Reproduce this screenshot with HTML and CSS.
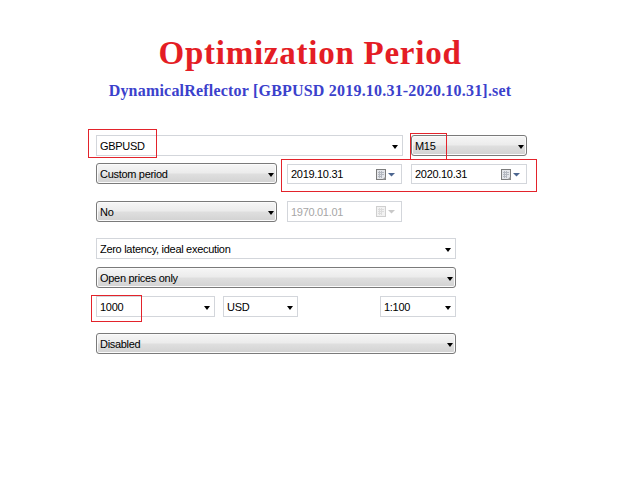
FILE: index.html
```html
<!DOCTYPE html>
<html>
<head>
<meta charset="utf-8">
<title>Optimization Period</title>
<link rel="stylesheet" href="styles.css">
</head>
<body>
<div class="page">
  <h1 class="title">Optimization Period</h1>
  <p class="subtitle">DynamicalReflector [GBPUSD 2019.10.31-2020.10.31].set</p>

  <div class="form">
    <div class="row row1">
      <div class="ctl flat w306"><span class="val">GBPUSD</span><i class="arrow"></i><b class="mark mark-symbol"></b></div>
      <div class="ctl grad w116"><span class="val">M15</span><i class="arrow"></i><b class="mark mark-tf"></b></div>
    </div>

    <div class="row row2">
      <div class="ctl grad w181"><span class="val">Custom period</span><i class="arrow"></i></div>
      <div class="dates">
        <div class="ctl flat w115"><span class="val">2019.10.31</span>
          <svg class="cal" width="20" height="11" viewBox="0 0 20 11"><rect x="0.5" y="0.5" width="9" height="10" fill="#e4e6ea" stroke="#7c7c7c"/><path d="M2 3.5H8M2 5.5H8M2 7.5H6M3.5 2V9M5.5 2V9" stroke="#b4b8c0" stroke-width="1"/><path d="M6.5 10.5L9.5 7.5V10.5Z" fill="#9a9a9a"/><path d="M12 4H19L15.5 7.5Z" fill="#4c6690"/></svg>
        </div>
        <div class="ctl flat w116"><span class="val">2020.10.31</span>
          <svg class="cal" width="20" height="11" viewBox="0 0 20 11"><rect x="0.5" y="0.5" width="9" height="10" fill="#e4e6ea" stroke="#7c7c7c"/><path d="M2 3.5H8M2 5.5H8M2 7.5H6M3.5 2V9M5.5 2V9" stroke="#b4b8c0" stroke-width="1"/><path d="M6.5 10.5L9.5 7.5V10.5Z" fill="#9a9a9a"/><path d="M12 4H19L15.5 7.5Z" fill="#4c6690"/></svg>
        </div>
        <b class="mark mark-dates"></b>
      </div>
    </div>

    <div class="row row3">
      <div class="ctl grad w181"><span class="val">No</span><i class="arrow"></i></div>
      <div class="ctl flat disabled w115"><span class="val">1970.01.01</span>
        <svg class="cal" width="20" height="11" viewBox="0 0 20 11"><rect x="0.5" y="0.5" width="9" height="10" fill="#f2f2f2" stroke="#cfcfcf"/><path d="M2 3.5H8M2 5.5H8M2 7.5H6M3.5 2V9M5.5 2V9" stroke="#dcdcdc" stroke-width="1"/><path d="M12 4H19L15.5 7.5Z" fill="#c8c8c8"/></svg>
      </div>
    </div>

    <div class="row row4">
      <div class="ctl flat w360"><span class="val">Zero latency, ideal execution</span><i class="arrow"></i></div>
    </div>

    <div class="row row5">
      <div class="ctl grad w360"><span class="val">Open prices only</span><i class="arrow"></i></div>
    </div>

    <div class="row row6">
      <div class="ctl flat w119"><span class="val">1000</span><i class="arrow"></i><b class="mark mark-deposit"></b></div>
      <div class="ctl flat w75"><span class="val">USD</span><i class="arrow"></i></div>
      <div class="ctl flat w76 push"><span class="val">1:100</span><i class="arrow"></i></div>
    </div>

    <div class="row row7">
      <div class="ctl grad w360"><span class="val">Disabled</span><i class="arrow"></i></div>
    </div>
  </div>
</div>
</body>
</html>
```

FILE: styles.css
```css
html, body {
  margin: 0;
  padding: 0;
  background: #ffffff;
}

.page {
  width: 620px;
}

.title {
  margin: 0;
  padding-top: 34px;
  height: 38px;
  line-height: 38px;
  text-align: center;
  font-family: "Liberation Serif", "Times New Roman", serif;
  font-weight: bold;
  font-size: 33px;
  letter-spacing: 0.75px;
  color: #e41d25;
}

.subtitle {
  margin: 10px 0 0 0;
  height: 18px;
  line-height: 18px;
  text-align: center;
  font-family: "Liberation Serif", "Times New Roman", serif;
  font-weight: bold;
  font-size: 16px;
  letter-spacing: 0.2px;
  color: #3b41cc;
}

.form {
  padding-left: 96px;
  margin-top: 35px;
  display: flex;
  flex-direction: column;
  font-family: "Liberation Sans", Arial, sans-serif;
  font-size: 11px;
  letter-spacing: -0.3px;
  color: #000;
}

.row {
  display: flex;
  align-items: flex-start;
}
.row1 { gap: 8px; }
.row2 { margin-top: 7px; gap: 10px; }
.row3 { margin-top: 17px; gap: 10px; }
.row4 { margin-top: 16px; }
.row5 { margin-top: 8px; }
.row6 { margin-top: 8px; gap: 8px; }
.row7 { margin-top: 16px; }

.ctl {
  position: relative;
  box-sizing: border-box;
  height: 21px;
  display: flex;
  align-items: center;
  padding-left: 3px;
}

.flat {
  border: 1px solid #d3d6db;
  background: #ffffff;
}

.grad {
  border: 1px solid #7a7a7a;
  border-radius: 3px;
  background: linear-gradient(#f6f6f6 0%, #ececec 45%, #dedede 55%, #d2d2d2 100%);
  box-shadow: inset 0 0 0 1px #fbfbfb;
}

.val {
  flex: 1;
  white-space: nowrap;
  overflow: hidden;
}

.arrow {
  width: 0;
  height: 0;
  border-left: 3.5px solid transparent;
  border-right: 3.5px solid transparent;
  border-top: 4px solid #000;
  margin-top: 2px;
}
.flat .arrow { margin-right: 4px; }
.grad .arrow { margin-right: 2px; }

.cal {
  margin-right: 5px;
  flex: none;
}

.disabled .val { color: #a6a6a6; }

.w306 { width: 307px; }
.w116 { width: 116px; }
.w181 { width: 181px; }
.w115 { width: 115px; }
.w360 { width: 360px; }
.w119 { width: 119px; }
.w75 { width: 75px; }
.w76 { width: 76px; }
.push { margin-left: 74px; }

.dates {
  position: relative;
  display: flex;
  gap: 9px;
  margin-top: 1px;
}
.dates .ctl { height: 20px; }

.mark {
  position: absolute;
  border: 1px solid #e3232b;
  box-sizing: border-box;
  pointer-events: none;
  z-index: 2;
}
.mark-symbol { left: -9px; top: -7px; width: 69px; height: 29px; }
.mark-tf { left: -2px; top: -3px; width: 37px; height: 27px; }
.mark-dates { left: -6px; top: -5px; right: -10px; bottom: -8px; }
.mark-deposit { left: -6px; top: -2px; width: 51px; height: 27px; border-color: #e3232b; }
```
